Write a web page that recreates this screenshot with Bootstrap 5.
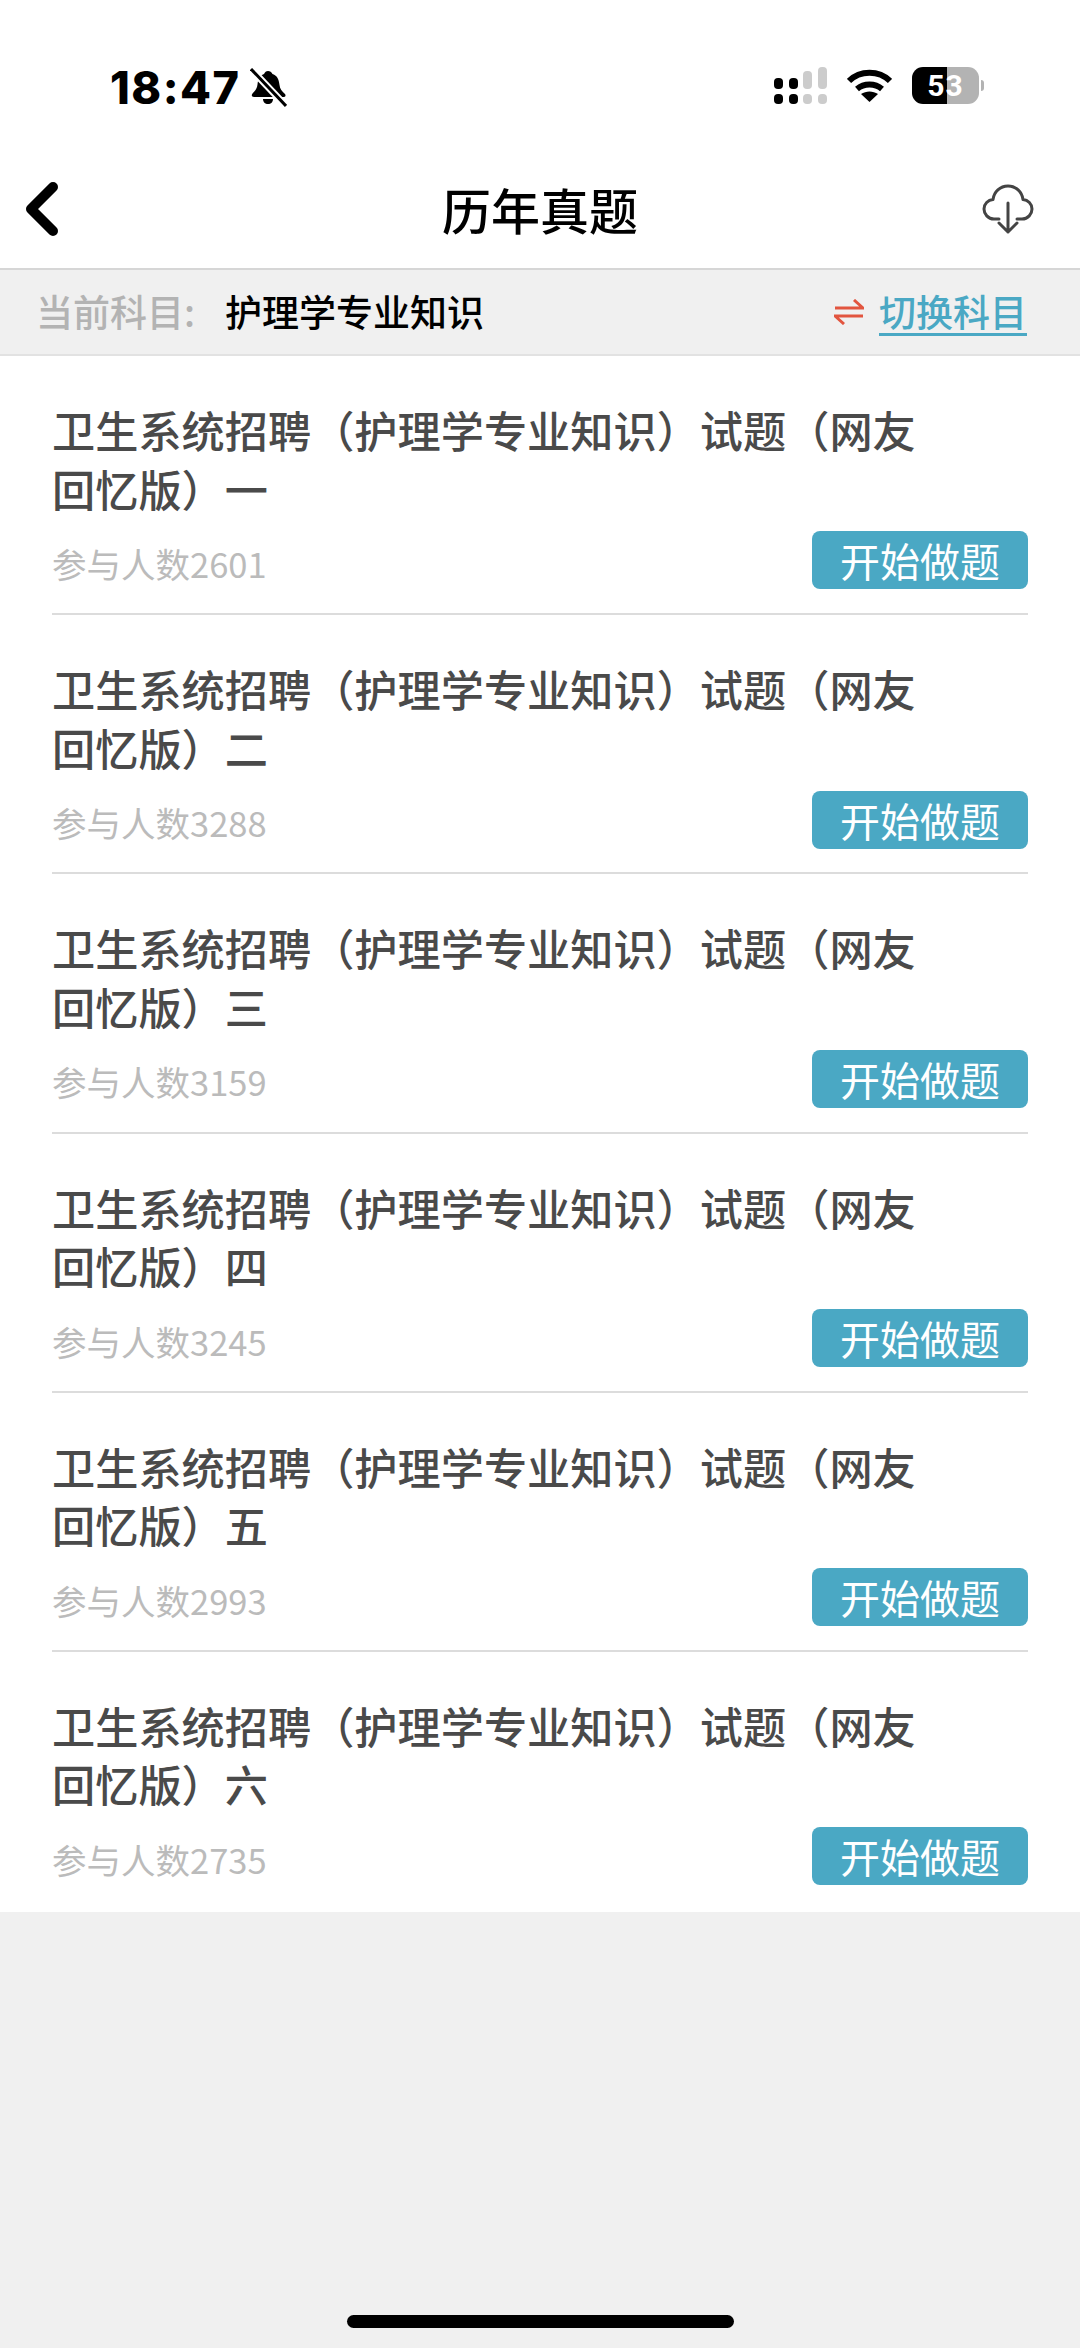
<!DOCTYPE html>
<html lang="zh-CN">
<head>
    <meta charset="UTF-8">
    <meta name="viewport" content="width=device-width, initial-scale=1.0">
    <title>历年真题</title>
    <link href="https://cdn.jsdelivr.net/npm/bootstrap@5.3.0/dist/css/bootstrap.min.css" rel="stylesheet">
    <style>
        body { width: 1080px; height: 2348px; background: #f0f0f0; font-family: "Noto Sans CJK SC", "Liberation Sans", sans-serif; overflow: hidden; }
        .status-area { height: 130px; background: #fff; padding: 68px 0 0 110px; }
        .clock { font-family: Inter, "Liberation Sans", sans-serif; font-weight: 800; font-size: 45px; line-height: 40px; color: #000; width: 128px; letter-spacing: 1.5px; white-space: nowrap; }
        .bell-icon { margin-left: 12px; }
        .status-icons { margin-left: auto; margin-right: 96px; margin-top: -1px; }
        .batt { width: 67px; height: 37px; border-radius: 11px; background: linear-gradient(90deg, #000 0, #000 52.5%, #b3b3b3 52.5%); color: #fff; font: 700 30px/37px Roboto, sans-serif; text-align: center; letter-spacing: 1px; }
        .batt-tip { width: 3px; height: 11px; margin-left: 2px; background: #b3b3b3; border-radius: 0 3px 3px 0; }
        .top-nav { height: 140px; background: #fff; padding: 20px 25px 0; border-bottom: 2px solid #d6d6d6; }
        .nav-side { flex: 1 1 0; }
        .cloud-icon { margin-right: 21px; }
        .top-nav h1 { font-size: 49px; font-weight: 500; color: #000; margin: 0; }
        .subject-bar { height: 86px; background: #f0f0f0; padding: 0 53px 0 36px; border-bottom: 2px solid #e2e2e2; font-size: 37px; font-weight: 500; }
        .subject-label { color: #b3b3b3; width: 189px; }
        .subject-name { color: #000; }
        .switch-link { color: #4aa8c4; text-decoration: underline; text-underline-offset: 6px; margin-left: 15px; }
        .paper-list { background: #fff; padding: 0 52px; height: 1556px; }
        .paper-list .list-group-item { height: 259.2px; padding: 44px 0 0; border: 0; border-bottom: 2px solid #dcdcdc; }
        .paper-title { font-size: 43.2px; line-height: 58.5px; font-weight: 500; color: #4a4a4a; max-width: 880px; margin: 0; }
        .paper-count { font-size: 34.5px; color: #bbb; padding-top: 7px; }
        .start-btn { width: 216px; height: 58px; padding: 0; font-size: 40px; line-height: 56px; color: #fff; background: #4aa8c4; border: 0; border-radius: 8px; }
        .paper-meta { margin-top: 14px; }
        .home-bar { width: 387px; height: 13px; background: #000; border-radius: 7px; margin: 403px auto 0; }
    </style>
</head>
<body>

<div class="status-area d-flex align-items-start">
    <span class="clock">18:47</span>
    <svg class="bell-icon" width="37" height="40" viewBox="0 0 37 40">
        <path d="M18 3c2 0 3.500 1 4.500 3 5 1.500 6.500 6 7 11 .4 4 2.500 6 5.500 9 1 1.500 .5 3-1 3H4c-2 0-3-1.500-1.500-3.500 3-3 4.500-5 5-9 .5-5 2-9 6.500-10.500C15 4 16 3 18 3z" fill="#000"/>
        <path d="M13 31h10c0 3-2 5-5 5s-5-2-5-5z" fill="#000"/>
        <path d="M1 1 36 38" stroke="#fff" stroke-width="7"/>
        <path d="M1 1 36 38" stroke="#000" stroke-width="3"/>
    </svg>
    <div class="status-icons d-flex align-items-center gap-3">
        <svg width="53" height="37" viewBox="0 0 53 37" fill="#000">
            <rect x="0" y="11" width="9" height="11" rx="4"/><rect x="0" y="27" width="9" height="10" rx="4"/>
            <rect x="15" y="11" width="9" height="11" rx="4"/><rect x="15" y="27" width="9" height="10" rx="4"/>
            <rect x="29" y="4" width="9" height="18" rx="4" fill="#ccc"/><rect x="29" y="27" width="9" height="10" rx="4" fill="#ccc"/>
            <rect x="44" y="0" width="9" height="22" rx="4" fill="#ccc"/><rect x="44" y="27" width="9" height="10" rx="4" fill="#ccc"/>
        </svg>
        <svg class="ms-1" width="45" height="34" viewBox="0 0 45 34" fill="none" stroke="#000" stroke-width="6">
            <path d="M2 12C13 1 32 1 43 12"/>
            <path d="M10 20c7-6 18-6 25 0"/>
            <path d="M22.500 33 14 25c5-3.500 12-3.500 17 0z" fill="#000" stroke="none"/>
        </svg>
        <div class="d-flex align-items-center ms-1">
            <div class="batt">53</div>
            <div class="batt-tip"></div>
        </div>
    </div>
</div>

<div class="top-nav d-flex align-items-center">
    <div class="nav-side d-flex">
        <svg width="34" height="56" viewBox="0 0 34 56" fill="none" stroke="#000" stroke-width="10" stroke-linecap="round" stroke-linejoin="round">
            <path d="M28 6 6 28l22 22"/>
        </svg>
    </div>
    <h1>历年真题</h1>
    <div class="nav-side d-flex justify-content-end">
        <svg class="cloud-icon" width="52" height="50" viewBox="0 0 52 50" fill="none" stroke="#444" stroke-width="3" stroke-linecap="round" stroke-linejoin="round">
            <path d="M17 35H12C6 35 2 30 2 25c0-5 4-9 9-9.500C12 8 18 2 26 2s14 6 15 13.500c5 .5 9 4.500 9 9.500 0 5-4 10-10 10h-5"/>
            <path d="M26 19v29M17 39l9 9 9-9"/>
        </svg>
    </div>
</div>

<div class="subject-bar d-flex align-items-center">
    <span class="subject-label">当前科目:</span>
    <span class="subject-name">护理学专业知识</span>
    <svg class="ms-auto" width="30" height="26" viewBox="0 0 30 26" fill="none" stroke="#e2553f" stroke-width="3">
        <path d="M1 9h28L20 1"/>
        <path d="M29 17H1l9 8"/>
    </svg>
    <a class="switch-link" href="#">切换科目</a>
</div>

<div class="paper-list list-group list-group-flush">
    <div class="list-group-item">
        <p class="paper-title">卫生系统招聘（护理学专业知识）试题（网友回忆版）一</p>
        <div class="paper-meta d-flex justify-content-between align-items-center">
            <span class="paper-count">参与人数2601</span>
            <button class="btn start-btn" type="button">开始做题</button>
        </div>
    </div>
    <div class="list-group-item">
        <p class="paper-title">卫生系统招聘（护理学专业知识）试题（网友回忆版）二</p>
        <div class="paper-meta d-flex justify-content-between align-items-center">
            <span class="paper-count">参与人数3288</span>
            <button class="btn start-btn" type="button">开始做题</button>
        </div>
    </div>
    <div class="list-group-item">
        <p class="paper-title">卫生系统招聘（护理学专业知识）试题（网友回忆版）三</p>
        <div class="paper-meta d-flex justify-content-between align-items-center">
            <span class="paper-count">参与人数3159</span>
            <button class="btn start-btn" type="button">开始做题</button>
        </div>
    </div>
    <div class="list-group-item">
        <p class="paper-title">卫生系统招聘（护理学专业知识）试题（网友回忆版）四</p>
        <div class="paper-meta d-flex justify-content-between align-items-center">
            <span class="paper-count">参与人数3245</span>
            <button class="btn start-btn" type="button">开始做题</button>
        </div>
    </div>
    <div class="list-group-item">
        <p class="paper-title">卫生系统招聘（护理学专业知识）试题（网友回忆版）五</p>
        <div class="paper-meta d-flex justify-content-between align-items-center">
            <span class="paper-count">参与人数2993</span>
            <button class="btn start-btn" type="button">开始做题</button>
        </div>
    </div>
    <div class="list-group-item">
        <p class="paper-title">卫生系统招聘（护理学专业知识）试题（网友回忆版）六</p>
        <div class="paper-meta d-flex justify-content-between align-items-center">
            <span class="paper-count">参与人数2735</span>
            <button class="btn start-btn" type="button">开始做题</button>
        </div>
    </div>
</div>

<div class="home-bar"></div>

<script src="https://cdn.jsdelivr.net/npm/bootstrap@5.3.0/dist/js/bootstrap.bundle.min.js"></script>
</body>
</html>
